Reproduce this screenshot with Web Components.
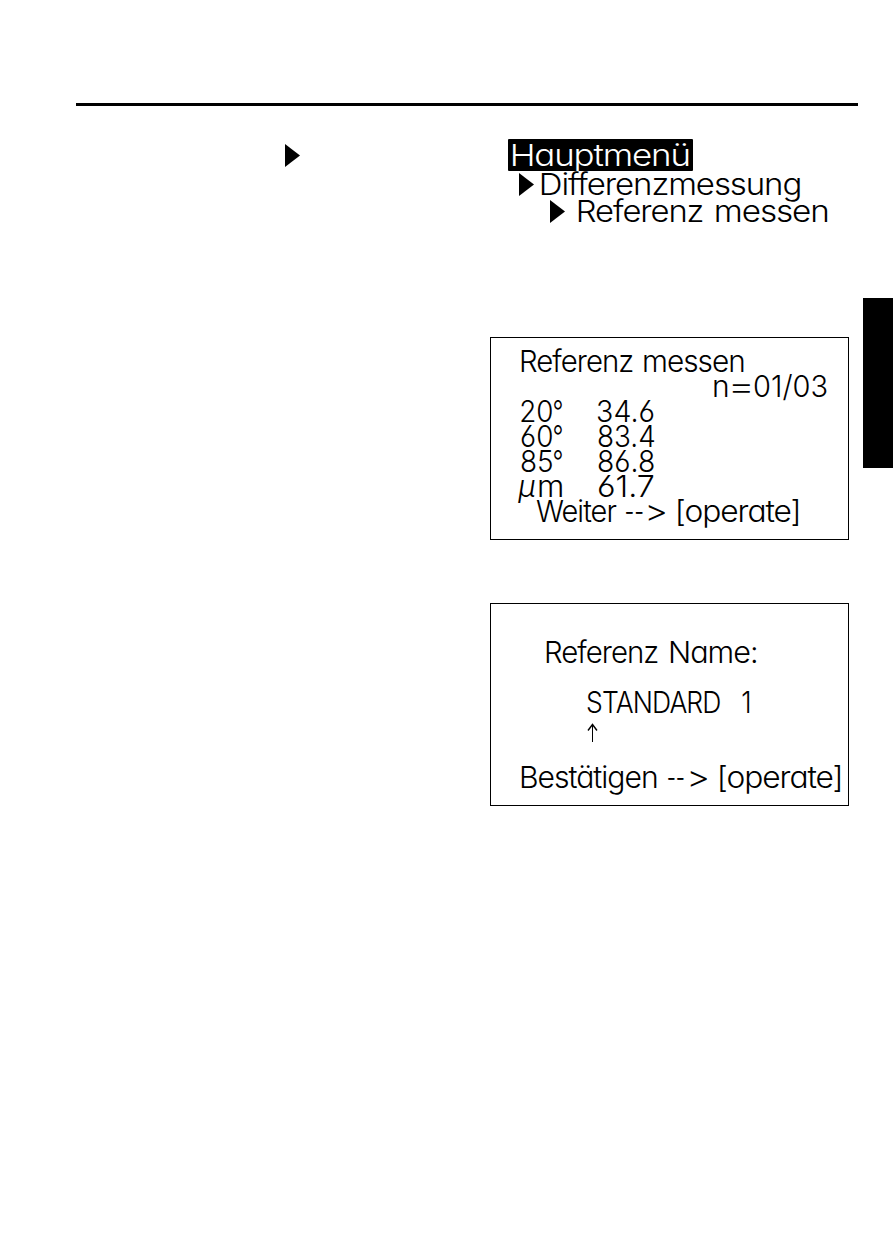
<!DOCTYPE html>
<html lang="de">
<head>
  <meta charset="utf-8">
  <title>Referenz messen</title>
  <style>
    body {
      margin: 0;
      background: #fff;
      color: #000;
    }
  </style>
</head>
<body>
  <manual-page>
    <nav-arrow slot="margin"></nav-arrow>

    <menu-path slot="path">
      <menu-item style="--indent: 0px" selected><lcd-text width="177" indent="4">Hauptmenü</lcd-text></menu-item>
      <menu-item style="--indent: 11px"><nav-arrow></nav-arrow><lcd-text width="259" indent="7">Differenzmessung</lcd-text></menu-item>
      <menu-item style="--indent: 42px"><nav-arrow></nav-arrow><lcd-text width="125" indent="13">Referenz</lcd-text><lcd-text width="112" indent="13">messen</lcd-text></menu-item>
    </menu-path>

    <lcd-screen>
      <lcd-row><lcd-text width="112" indent="30">Referenz</lcd-text><lcd-text width="100" indent="11">messen</lcd-text></lcd-row>
      <lcd-row><lcd-text width="14" indent="223">n</lcd-text><lcd-text width="18" indent="4">=</lcd-text><lcd-text width="73" indent="4" loose>01/03</lcd-text></lcd-row>
      <lcd-row><lcd-text width="31" indent="30" loose>20</lcd-text><lcd-text width="8" indent="2">°</lcd-text><lcd-text width="56" indent="36" loose>34.6</lcd-text></lcd-row>
      <lcd-row><lcd-text width="31" indent="30" loose>60</lcd-text><lcd-text width="8" indent="2">°</lcd-text><lcd-text width="56" indent="36" loose>83.4</lcd-text></lcd-row>
      <lcd-row><lcd-text width="31" indent="30" loose>85</lcd-text><lcd-text width="8" indent="2">°</lcd-text><lcd-text width="56" indent="36" loose>86.8</lcd-text></lcd-row>
      <lcd-row><lcd-text width="16" indent="29" slanted>µ</lcd-text><lcd-text width="23" indent="3">m</lcd-text><lcd-text width="56" indent="36" loose>61.7</lcd-text></lcd-row>
      <lcd-row><lcd-text width="81" indent="45">Weiter</lcd-text><lcd-text width="17" indent="9" loose>--</lcd-text><lcd-text width="17" indent="5">&gt;</lcd-text><lcd-text width="120" indent="13">[operate]</lcd-text></lcd-row>
    </lcd-screen>

    <lcd-screen>
      <lcd-row></lcd-row>
      <lcd-row><lcd-text width="112" indent="55">Referenz</lcd-text><lcd-text width="86" indent="12">Name:</lcd-text></lcd-row>
      <lcd-row></lcd-row>
      <lcd-row><lcd-text width="133" indent="96">STANDARD</lcd-text><lcd-text width="7" indent="22">1</lcd-text></lcd-row>
      <lcd-row><lcd-cursor></lcd-cursor></lcd-row>
      <lcd-row></lcd-row>
      <lcd-row><lcd-text width="136" indent="30">Bestätigen</lcd-text><lcd-text width="16" indent="11" loose>--</lcd-text><lcd-text width="17" indent="6">&gt;</lcd-text><lcd-text width="120" indent="13">[operate]</lcd-text></lcd-row>
    </lcd-screen>
  </manual-page>

  <script>
    /**
     * Attaches an open shadow root holding the given markup.
     *
     * @param {HTMLElement} host - The custom element.
     * @param {string} html - Styles and markup.
     */
    function attach (host, html) {
      const template = document.createElement('template')
      template.innerHTML = html
      host.attachShadow({ mode: 'open' }).appendChild(template.content.cloneNode(true))
    }

    const LCD_FONT = '350 30px Inter, "Liberation Sans", sans-serif'
    const TRACKING = -1
    const pen = document.createElement('canvas').getContext('2d')

    /**
     * A piece of display text, stretched so that its ink fills the given width.
     */
    customElements.define('lcd-text',
      class extends HTMLElement {
        constructor () {
          super()
          attach(this, `
            <style>
              :host {
                display: block;
                flex: none;
                height: 25px;
              }
              span {
                display: inline-block;
                font: ${LCD_FONT};
                line-height: 25px;
                letter-spacing: ${TRACKING}px;
                font-feature-settings: "cv11", "cv03";
                white-space: pre;
                transform-origin: 0 0;
              }
              :host([loose]) span {
                letter-spacing: 0;
              }
              :host([slanted]) span {
                font-style: italic;
              }
            </style>
            <span><slot></slot></span>
          `)
          this._span = this.shadowRoot.querySelector('span')
        }

        connectedCallback () {
          const width = Number(this.getAttribute('width'))
          this.style.width = `${width}px`
          this.style.marginLeft = `${this.getAttribute('indent')}px`

          pen.font = LCD_FONT
          const metrics = pen.measureText(this.textContent)
          const left = -metrics.actualBoundingBoxLeft
          const right = metrics.width - metrics.actualBoundingBoxRight + (this.hasAttribute('loose') ? 0 : TRACKING)
          const scale = width / (this._span.getBoundingClientRect().width - left - right)
          this._span.style.transform = `translateX(${-left * scale}px) scaleX(${scale})`
        }
      }
    )

    customElements.define('lcd-row',
      class extends HTMLElement {
        constructor () {
          super()
          attach(this, `
            <style>
              :host {
                display: flex;
                height: 25px;
              }
            </style>
            <slot></slot>
          `)
        }
      }
    )

    customElements.define('lcd-cursor',
      class extends HTMLElement {
        constructor () {
          super()
          attach(this, `
            <style>
              :host {
                display: block;
                margin: 8px 0 0 96px;
              }
              svg {
                display: block;
              }
            </style>
            <svg width="11" height="19" viewBox="0 0 11 19" fill="none" stroke="#000">
              <path d="M5.5 19V1.5" />
              <path d="M1 7.5L5.5 1.5L10 7.5" stroke-width="1.4" />
            </svg>
          `)
        }
      }
    )

    customElements.define('nav-arrow',
      class extends HTMLElement {
        constructor () {
          super()
          attach(this, `
            <style>
              :host {
                display: block;
                flex: none;
                width: 15px;
                height: 23px;
              }
              svg {
                display: block;
              }
            </style>
            <svg width="15" height="23" viewBox="0 0 15 23"><path d="M0 0L15 11.5L0 23Z" /></svg>
          `)
        }
      }
    )

    customElements.define('menu-item',
      class extends HTMLElement {
        constructor () {
          super()
          attach(this, `
            <style>
              :host {
                display: flex;
                height: 27px;
                padding-top: 1px;
                box-sizing: border-box;
                margin-left: var(--indent);
              }
              :host([selected]) {
                width: 185px;
                height: 32px;
                padding-top: 4px;
                border-radius: 1px;
                background: #000;
                color: #fff;
              }
              ::slotted(nav-arrow) {
                margin-top: 1px;
              }
            </style>
            <slot></slot>
          `)
        }
      }
    )

    customElements.define('menu-path',
      class extends HTMLElement {
        constructor () {
          super()
          attach(this, `
            <style>
              :host {
                display: block;
                height: 198px;
                margin-left: 18px;
              }
            </style>
            <slot></slot>
          `)
        }
      }
    )

    customElements.define('lcd-screen',
      class extends HTMLElement {
        constructor () {
          super()
          attach(this, `
            <style>
              :host {
                display: block;
                box-sizing: border-box;
                width: 359px;
                height: 203px;
                padding-top: 11px;
                margin-bottom: 63px;
                border: 1px solid #000;
              }
            </style>
            <slot></slot>
          `)
        }
      }
    )

    customElements.define('manual-page',
      class extends HTMLElement {
        constructor () {
          super()
          attach(this, `
            <style>
              :host {
                display: block;
                box-sizing: border-box;
                height: 1259px;
                padding-top: 103px;
                overflow: hidden;
              }
              hr {
                width: 782px;
                height: 3px;
                margin: 0 0 0 76px;
                border: 0;
                background: #000;
              }
              .columns {
                display: grid;
                grid-template-columns: 205px 359px 30px;
                padding-left: 285px;
                padding-top: 33px;
              }
              .margin {
                padding-top: 5px;
              }
              .tab {
                width: 30px;
                height: 170px;
                margin: 159px 0 0 14px;
                background: #000;
              }
            </style>
            <hr>
            <div class="columns">
              <div class="margin"><slot name="margin"></slot></div>
              <div><slot name="path"></slot><slot></slot></div>
              <div class="tab"></div>
            </div>
          `)
        }
      }
    )
  </script>
</body>
</html>
